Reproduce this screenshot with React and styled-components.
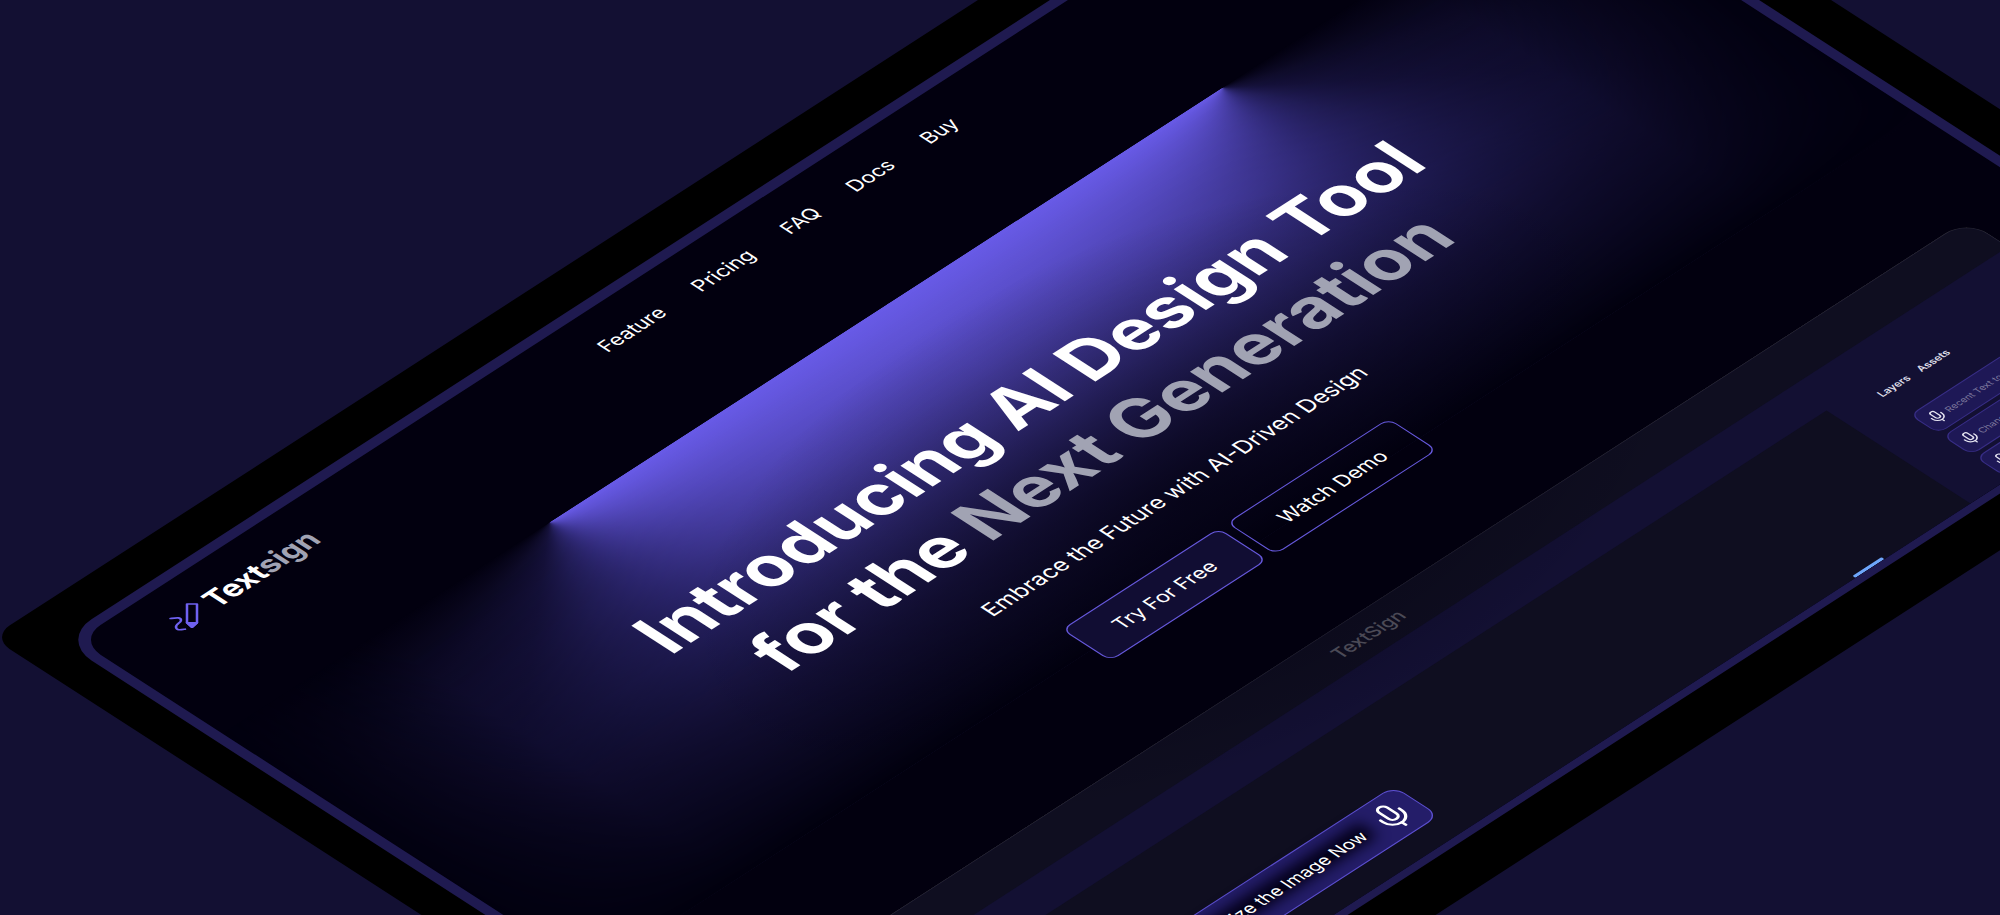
import React from "react";
import styled, { createGlobalStyle } from "styled-components";
import { Mic } from "lucide-react";

const GlobalStyle = createGlobalStyle`
  *, *::before, *::after { box-sizing: border-box; }
  body {
    margin: 0;
    background: #131033;
    font-family: Inter, "Liberation Sans", sans-serif;
    color: #fff;
  }
  h1, p { margin: 0; }
  a { color: inherit; text-decoration: none; }
  button, input { font: inherit; color: inherit; }
`;

const Stage = styled.main`
  height: 100vh;
  overflow: hidden;
  display: grid;
  place-content: center;
`;

/* The whole device is laid out flat and then tilted into an isometric view. */
const Device = styled.div`
  width: 1413px;
  padding: 36px 36px 44px 32px;
  background: #000;
  border-radius: 18px;
  transform: matrix(1, -0.646, 1, 0.646, 166, 26);
`;

const Screen = styled.div`
  position: relative;
  overflow: hidden;
  border: 9px solid #1f1a50;
  border-bottom-width: 7px;
  border-radius: 32px;
  background: #02000f;
`;

const Header = styled.header`
  display: grid;
  grid-template-columns: 1fr auto 1fr;
  align-items: center;
  height: 74px;
  padding: 0 54px;
`;

const Brand = styled.a`
  display: flex;
  align-items: center;
  gap: 4px;
  font-size: 25px;
  font-weight: 700;
  line-height: 30px;
`;

const Muted = styled.span`
  color: #a1a3b3;
`;

const Nav = styled.nav`
  display: flex;
  gap: 33px;
  font-size: 17px;
  line-height: 20px;
`;

const Hero = styled.section`
  position: relative;
  display: flex;
  flex-direction: column;
  align-items: center;
  padding: 178px 0 86px;
`;

const Lamp = styled.div`
  position: absolute;
  top: 71px;
  left: 50%;
  width: 1346px;
  height: 370px;
  transform: translateX(-50%);
  display: grid;
  grid-template-columns: 1fr 1fr;
  mask-image:
    linear-gradient(
      to bottom,
      #000 0,
      rgba(0, 0, 0, 0.84) 99px,
      rgba(0, 0, 0, 0.66) 167px,
      rgba(0, 0, 0, 0.36) 250px,
      transparent 370px
    ),
    linear-gradient(to right, transparent, #000 160px calc(100% - 160px), transparent);
  mask-composite: intersect;
`;

/* Each beam is opaque and the two overlap a little, so no seam shows. */
const Beam = styled.div`
  margin-right: ${(p) => (p.$side === "left" ? "-2px" : "0")};
  background: ${(p) =>
    p.$side === "left"
      ? `conic-gradient(from 70deg at 336px 0,
          #7465ff 0deg, #322b7d 110deg, #231e5b 138deg, #15113b 160deg, #0e0b2a 178deg, #02000f 200deg)`
      : `conic-gradient(from 90deg at 336px 0,
          #02000f 0deg, #0e0b2a 22deg, #15113b 40deg, #231e5b 62deg, #322b7d 90deg, #7465ff 200deg, #02000f 200deg)`};
`;

const Shade = styled.div`
  position: absolute;
  top: 111px;
  left: 50%;
  width: 840px;
  height: 520px;
  transform: translateX(-50%);
  background: radial-gradient(closest-side, rgba(2, 0, 15, 0.7), rgba(2, 0, 15, 0));
`;

const HeroTitle = styled.h1`
  position: relative;
  font-size: 59px;
  font-weight: 700;
  line-height: 72px;
  text-align: center;
`;

const HeroLead = styled.p`
  position: relative;
  margin-top: 26px;
  font-size: 19px;
  line-height: 24px;
`;

const Actions = styled.div`
  position: relative;
  display: flex;
  gap: 8px;
  margin-top: 38px;
`;

const ActionButton = styled.button`
  height: 49px;
  padding: 0 29px;
  border: 1px solid #6658dc;
  border-radius: 8px;
  background: ${(p) => (p.$filled ? "#110d33" : "transparent")};
  font-size: 17px;
  line-height: 24px;
`;

const Preview = styled.section`
  height: 222px;
  margin: 0 57px;
  overflow: hidden;
  border: 1px solid #25242f;
  border-bottom: 0;
  border-radius: 22px 22px 0 0;
  background: #131033;
`;

const PreviewBar = styled.div`
  display: flex;
  align-items: center;
  justify-content: center;
  height: 41px;
  padding-right: 28px;
  background: #0f0e20;
  color: #5a5964;
  font-size: 16px;
  font-weight: 500;
`;

const Workspace = styled.div`
  display: grid;
  grid-template-columns: 200px 1fr 217px;
  height: 180px;
`;

const Canvas = styled.div`
  grid-column: 2;
  display: flex;
  align-items: flex-start;
  justify-content: space-between;
  margin-top: 36px;
  padding: 74px 86px 0 30px;
  background: #0f0e20;
`;

const Prompt = styled.label`
  display: flex;
  align-items: center;
  gap: 12px;
  width: 257px;
  height: 46px;
  padding: 0 7px 0 16px;
  border: 1px solid #5c4fd0;
  border-radius: 11px;
  background: #241d69;
`;

const PromptGlow = styled.span`
  display: flex;
  flex: 1;
  align-items: center;
  min-width: 0;
  height: 8px;
  background: #04011a;
  box-shadow: 0 -2px 12px 6px #04011a;
`;

const PromptInput = styled.input`
  flex: 1;
  min-width: 0;
  height: 20px;
  padding: 0;
  border: 0;
  outline: 0;
  background: none;
  font-size: 15px;
  line-height: 20px;
  text-align: right;
`;

const Selection = styled.div`
  align-self: flex-end;
  width: 29px;
  height: 3px;
  border-radius: 1px;
  background: #6ea6fb;
`;

const Sidebar = styled.aside`
  padding: 45px 24px 0 38px;
`;

const Tabs = styled.div`
  display: flex;
  gap: 10px;
  margin-bottom: 24px;
`;

const Tab = styled.button`
  padding: 0;
  border: 0;
  background: none;
  color: #dcdce6;
  font-size: 9px;
  font-weight: 600;
  line-height: 12px;
`;

const History = styled.div`
  display: grid;
  gap: 4px;
`;

const HistoryItem = styled.button`
  display: flex;
  align-items: center;
  gap: 1px;
  height: 29px;
  padding: 0 4px;
  border: 1px solid #372d85;
  border-radius: 8px;
  background: #1e1856;
  color: #7f7a9e;
  font-size: 8px;
  white-space: nowrap;

  svg { color: #e4e3f0; }
`;

const LogoMark = () => (
  <svg width="36" height="26" viewBox="0 0 36 26" fill="none" stroke="#6f61f0" strokeWidth="1.8" aria-hidden="true">
    <path d="M28.500 3 33.500 8 19 22.500 13 23.500 14 17.500Z" strokeLinejoin="round" />
    <path d="M14 17.500 19 22.500 13 23.500Z" fill="#6f61f0" strokeLinejoin="round" />
    <path d="M9 6C12 8 15.500 10 13 12.500C11 14.500 7 13 5 15.500C2.500 18.500 5.500 20 8 21.500" strokeLinecap="round" />
  </svg>
);

const links = ["Feature", "Pricing", "FAQ", "Docs", "Buy"];
const history = ["Recent Text to Sign", "Change the Image", "Create the Image"];

export default function App() {
  return (
    <>
      <GlobalStyle />
      <Stage>
        <Device>
          <Screen>
            <Header>
              <Brand href="#home">
                <LogoMark />
                <span>Text<Muted>sign</Muted></span>
              </Brand>
              <Nav aria-label="Main">
                {links.map((link) => (
                  <a key={link} href={`#${link.toLowerCase()}`}>{link}</a>
                ))}
              </Nav>
            </Header>
            <Hero>
              <Lamp>
                <Beam $side="left" />
                <Beam $side="right" />
              </Lamp>
              <Shade />
              <HeroTitle>
                Introducing AI Design Tool<br />
                for the <Muted>Next Generation</Muted>
              </HeroTitle>
              <HeroLead>Embrace the Future with AI-Driven Design</HeroLead>
              <Actions>
                <ActionButton $filled>Try For Free</ActionButton>
                <ActionButton>Watch Demo</ActionButton>
              </Actions>
            </Hero>
            <Preview>
              <PreviewBar>TextSign</PreviewBar>
              <Workspace>
                <Canvas>
                  <Prompt>
                    <PromptGlow>
                      <PromptInput aria-label="Prompt" defaultValue="Visualize the Image Now" />
                    </PromptGlow>
                    <Mic size={32} strokeWidth={1.75} />
                  </Prompt>
                  <Selection />
                </Canvas>
                <Sidebar>
                  <Tabs>
                    <Tab>Layers</Tab>
                    <Tab>Assets</Tab>
                  </Tabs>
                  <History>
                    {history.map((item) => (
                      <HistoryItem key={item}>
                        <Mic size={16} strokeWidth={1.75} />
                        {item}
                      </HistoryItem>
                    ))}
                  </History>
                </Sidebar>
              </Workspace>
            </Preview>
          </Screen>
        </Device>
      </Stage>
    </>
  );
}
